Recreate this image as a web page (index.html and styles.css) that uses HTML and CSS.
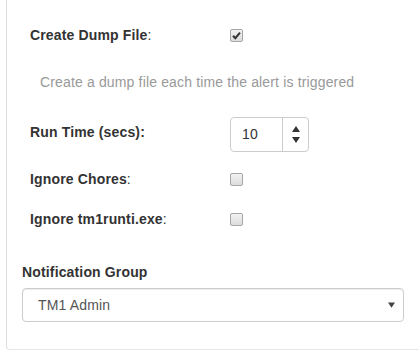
FILE: index.html
```html
<!DOCTYPE html>
<html>
<head>
<meta charset="utf-8">
<link rel="stylesheet" href="styles.css">
</head>
<body>
<div class="panel">
  <div class="row row-dump">
    <div class="label"><b>Create Dump File</b>:</div>
    <span class="cb checked">
      <svg viewBox="0 0 13 13" width="13" height="13"><path d="M3 6.8 L5.3 9.2 L10 3.6" fill="none" stroke="#333" stroke-width="2"/></svg>
    </span>
  </div>
  <div class="help">Create a dump file each time the alert is triggered</div>
  <div class="row row-run">
    <div class="label label-run"><b>Run Time (secs):</b></div>
    <div class="spinner">
      <div class="spin-value">10</div>
      <div class="spin-btns">
        <svg viewBox="0 0 8 6" width="8" height="6"><path d="M4 0 L8 6 L0 6 Z" fill="#333"/></svg>
        <svg viewBox="0 0 8 6" width="8" height="6"><path d="M0 0 L8 0 L4 6 Z" fill="#333"/></svg>
      </div>
    </div>
  </div>
  <div class="row row-chores">
    <div class="label"><b>Ignore Chores</b>:</div>
    <span class="cb"></span>
  </div>
  <div class="row row-runti">
    <div class="label"><b>Ignore tm1runti.exe</b>:</div>
    <span class="cb"></span>
  </div>
  <div class="group-title">Notification Group</div>
  <div class="select">
    <span>TM1 Admin</span>
    <svg class="caret" viewBox="0 0 8 6" width="7" height="6"><path d="M0 0 L8 0 L4 6 Z" fill="#444"/></svg>
  </div>
</div>
</body>
</html>
```

FILE: styles.css
```css
html, body {
  margin: 0;
  padding: 0;
  background: #fff;
  overflow: hidden;
}
body {
  font-family: "Liberation Sans", Arial, sans-serif;
  font-size: 14px;
  line-height: 20px;
  letter-spacing: 0.15px;
  color: #333;
  width: 419px;
  height: 351px;
}
.panel {
  box-sizing: border-box;
  margin-left: 6px;
  width: 430px;
  height: 350px;
  border-left: 1px solid #ddd;
  border-bottom: 1px solid #e6e6e6;
  border-right: 1px solid #ddd;
  border-bottom-left-radius: 4px;
  border-bottom-right-radius: 4px;
  padding-top: 25px;
}
.row {
  display: flex;
  align-items: center;
  padding-left: 23px;
  height: 20px;
}
.label {
  width: 200px;
  flex: none;
}
.label b {
  font-weight: bold;
}
.cb {
  box-sizing: border-box;
  width: 13px;
  height: 13px;
  border: 1px solid #a6a6a6;
  border-radius: 2px;
  background: linear-gradient(#f2f2f2, #dcdcdc);
  display: flex;
  align-items: center;
  justify-content: center;
}
.cb svg {
  display: block;
  margin: -1px;
}
.help {
  margin-top: 27px;
  padding-left: 33px;
  color: #999;
}
.row-run {
  margin-top: 25px;
  height: 35px;
}
.label-run {
  padding-bottom: 5px;
}
.spinner {
  box-sizing: border-box;
  width: 79px;
  height: 35px;
  border: 1px solid #ccc;
  border-radius: 4px;
  display: flex;
}
.spin-value {
  box-sizing: border-box;
  width: 52px;
  padding-left: 11px;
  line-height: 33px;
  border-right: 1px solid #ccc;
  color: #333;
}
.spin-btns {
  flex: 1;
  display: flex;
  flex-direction: column;
  align-items: center;
  justify-content: center;
  gap: 5px;
}
.spin-btns svg {
  display: block;
}
.row-chores {
  margin-top: 17px;
}
.row-runti {
  margin-top: 20px;
}
.group-title {
  margin-top: 33px;
  padding-left: 15px;
  font-weight: bold;
}
.select {
  box-sizing: border-box;
  margin-top: 6px;
  margin-left: 15px;
  width: 382px;
  height: 34px;
  border: 1px solid #ccc;
  border-radius: 4px;
  box-shadow: inset 0 1px 1px rgba(0,0,0,0.075);
  display: flex;
  align-items: center;
  justify-content: space-between;
  padding: 0 8px 0 15px;
  color: #555;
}
.caret {
  display: block;
}
```
